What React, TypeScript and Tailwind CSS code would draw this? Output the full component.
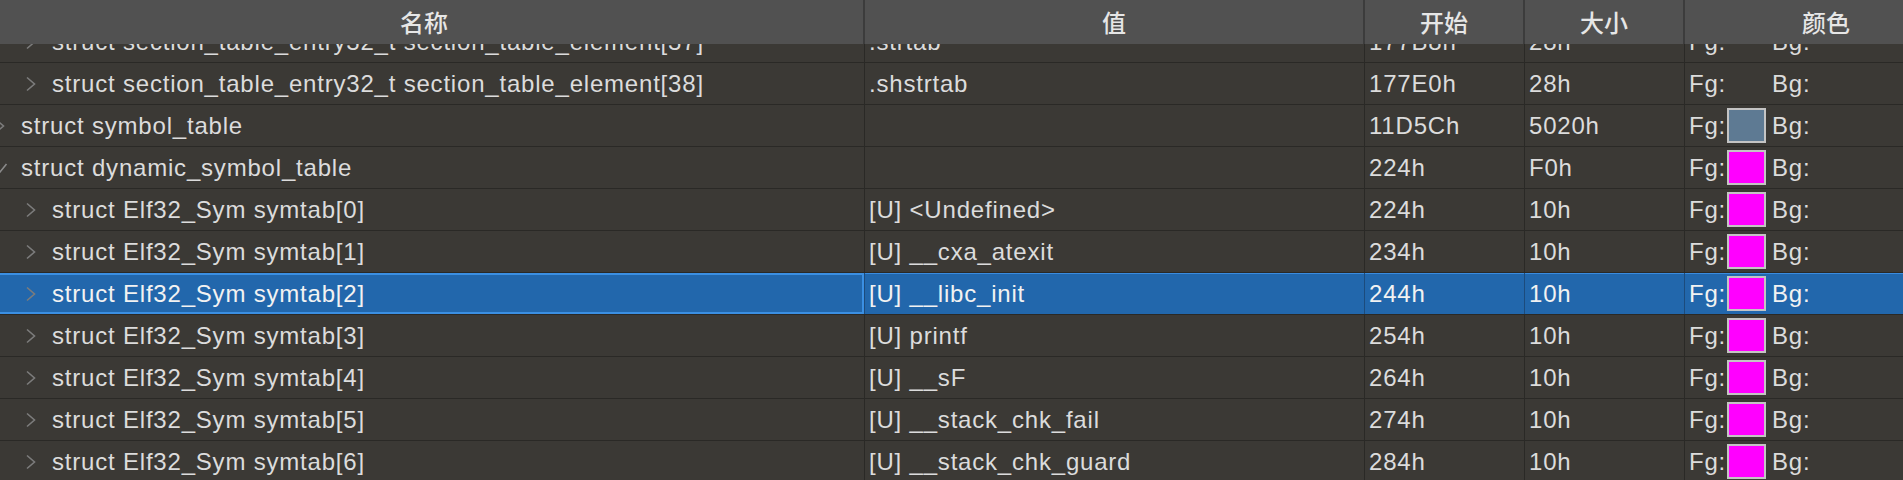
import React from "react";

type Row = {
  level: 0 | 1;
  expanded?: boolean;
  name: string;
  value: string;
  start: string;
  size: string;
  swatch: string | null;
  selected?: boolean;
};

const rows: Row[] = [
  { level: 1, name: "struct section_table_entry32_t section_table_element[37]", value: ".strtab", start: "177B8h", size: "28h", swatch: null },
  { level: 1, name: "struct section_table_entry32_t section_table_element[38]", value: ".shstrtab", start: "177E0h", size: "28h", swatch: null },
  { level: 0, name: "struct symbol_table", value: "", start: "11D5Ch", size: "5020h", swatch: "#5e7a93" },
  { level: 0, expanded: true, name: "struct dynamic_symbol_table", value: "", start: "224h", size: "F0h", swatch: "#ff00ff" },
  { level: 1, name: "struct Elf32_Sym symtab[0]", value: "[U] <Undefined>", start: "224h", size: "10h", swatch: "#ff00ff" },
  { level: 1, name: "struct Elf32_Sym symtab[1]", value: "[U] __cxa_atexit", start: "234h", size: "10h", swatch: "#ff00ff" },
  { level: 1, name: "struct Elf32_Sym symtab[2]", value: "[U] __libc_init", start: "244h", size: "10h", swatch: "#ff00ff", selected: true },
  { level: 1, name: "struct Elf32_Sym symtab[3]", value: "[U] printf", start: "254h", size: "10h", swatch: "#ff00ff" },
  { level: 1, name: "struct Elf32_Sym symtab[4]", value: "[U] __sF", start: "264h", size: "10h", swatch: "#ff00ff" },
  { level: 1, name: "struct Elf32_Sym symtab[5]", value: "[U] __stack_chk_fail", start: "274h", size: "10h", swatch: "#ff00ff" },
  { level: 1, name: "struct Elf32_Sym symtab[6]", value: "[U] __stack_chk_guard", start: "284h", size: "10h", swatch: "#ff00ff" },
];

function Chevron({ expanded }: { expanded?: boolean }) {
  if (expanded) {
    return (
      <span className="flex h-[16px] w-[12px] shrink-0 items-center justify-center">
        <svg width="16" height="12" viewBox="0 0 16 12" className="shrink-0">
          <polyline points="1.5,2 8,10 14.5,2" fill="none" stroke="#8a8a8a" strokeWidth="1.6" />
        </svg>
      </span>
    );
  }
  return (
    <span className="flex h-[16px] w-[12px] shrink-0 items-center justify-center">
      <svg width="12" height="16" viewBox="0 0 12 16" className="shrink-0">
        <polyline points="2,1.5 9.5,8 2,14.5" fill="none" stroke="#7c7c7c" strokeWidth="1.6" />
      </svg>
    </span>
  );
}

export default function App() {
  return (
    <div className="h-[480px] w-[1903px] overflow-hidden bg-[#3b3935] font-['Liberation_Sans','Noto_Sans_CJK_SC',sans-serif] text-[24px] tracking-[0.8px] text-[#dcdcdc]">
      <div className="-ml-[15px] w-[1982px]">
        {/* header */}
        <div className="relative z-10 flex h-[44px] bg-[#515151] font-['Noto_Sans_CJK_SC',sans-serif] font-medium tracking-normal text-[#e6e6e6]">
          <div className="flex w-[880px] items-center justify-center border-r-2 border-[#3c3c3c]">名称</div>
          <div className="flex w-[500px] items-center justify-center border-r-2 border-[#3c3c3c]">值</div>
          <div className="flex w-[160px] items-center justify-center border-r-2 border-[#3c3c3c]">开始</div>
          <div className="flex w-[160px] items-center justify-center border-r-2 border-[#3c3c3c]">大小</div>
          <div className="flex w-[282px] items-center justify-center">颜色</div>
        </div>
        {/* body */}
        <div className="-mt-[23px]">
          {rows.map((r, i) => {
            const sel = !!r.selected;
            const sep = sel ? "border-[#1c4b7c]" : "border-[#2a2926]";
            return (
              <div
                key={i}
                className={
                  sel
                    ? "flex h-[42px] border-b border-[#2a2926] bg-[#2267ac] text-[#f2f2f2] shadow-[inset_0_1px_0_#3a8ce0]"
                    : "flex h-[42px] border-b border-[#2a2926]"
                }
              >
                <div
                  className={
                    "flex w-[880px] items-center whitespace-nowrap border-r " +
                    sep +
                    (r.level === 0 ? " pl-[9px]" : " pl-[40px]") +
                    (sel ? " shadow-[inset_0_0_0_2px_#3b8fe2]" : "")
                  }
                >
                  <Chevron expanded={r.expanded} />
                  <span className="ml-[15px]">{r.name}</span>
                </div>
                <div className={"flex w-[500px] items-center whitespace-nowrap border-r pl-[4px] " + sep}>{r.value}</div>
                <div className={"flex w-[160px] items-center whitespace-nowrap border-r pl-[4px] " + sep}>{r.start}</div>
                <div className={"flex w-[160px] items-center whitespace-nowrap border-r pl-[4px] " + sep}>{r.size}</div>
                <div className="flex w-[282px] items-center whitespace-nowrap pl-[4px]">
                  <span className="w-[38px]">Fg:</span>
                  <span
                    className={
                      r.swatch
                        ? "-mt-[1px] h-[35px] w-[39px] shrink-0 border-2 border-[#c4c4c4]"
                        : "h-[35px] w-[39px] shrink-0"
                    }
                    style={r.swatch ? { backgroundColor: r.swatch } : undefined}
                  />
                  <span className="ml-[6px]">Bg:</span>
                </div>
              </div>
            );
          })}
        </div>
      </div>
    </div>
  );
}
